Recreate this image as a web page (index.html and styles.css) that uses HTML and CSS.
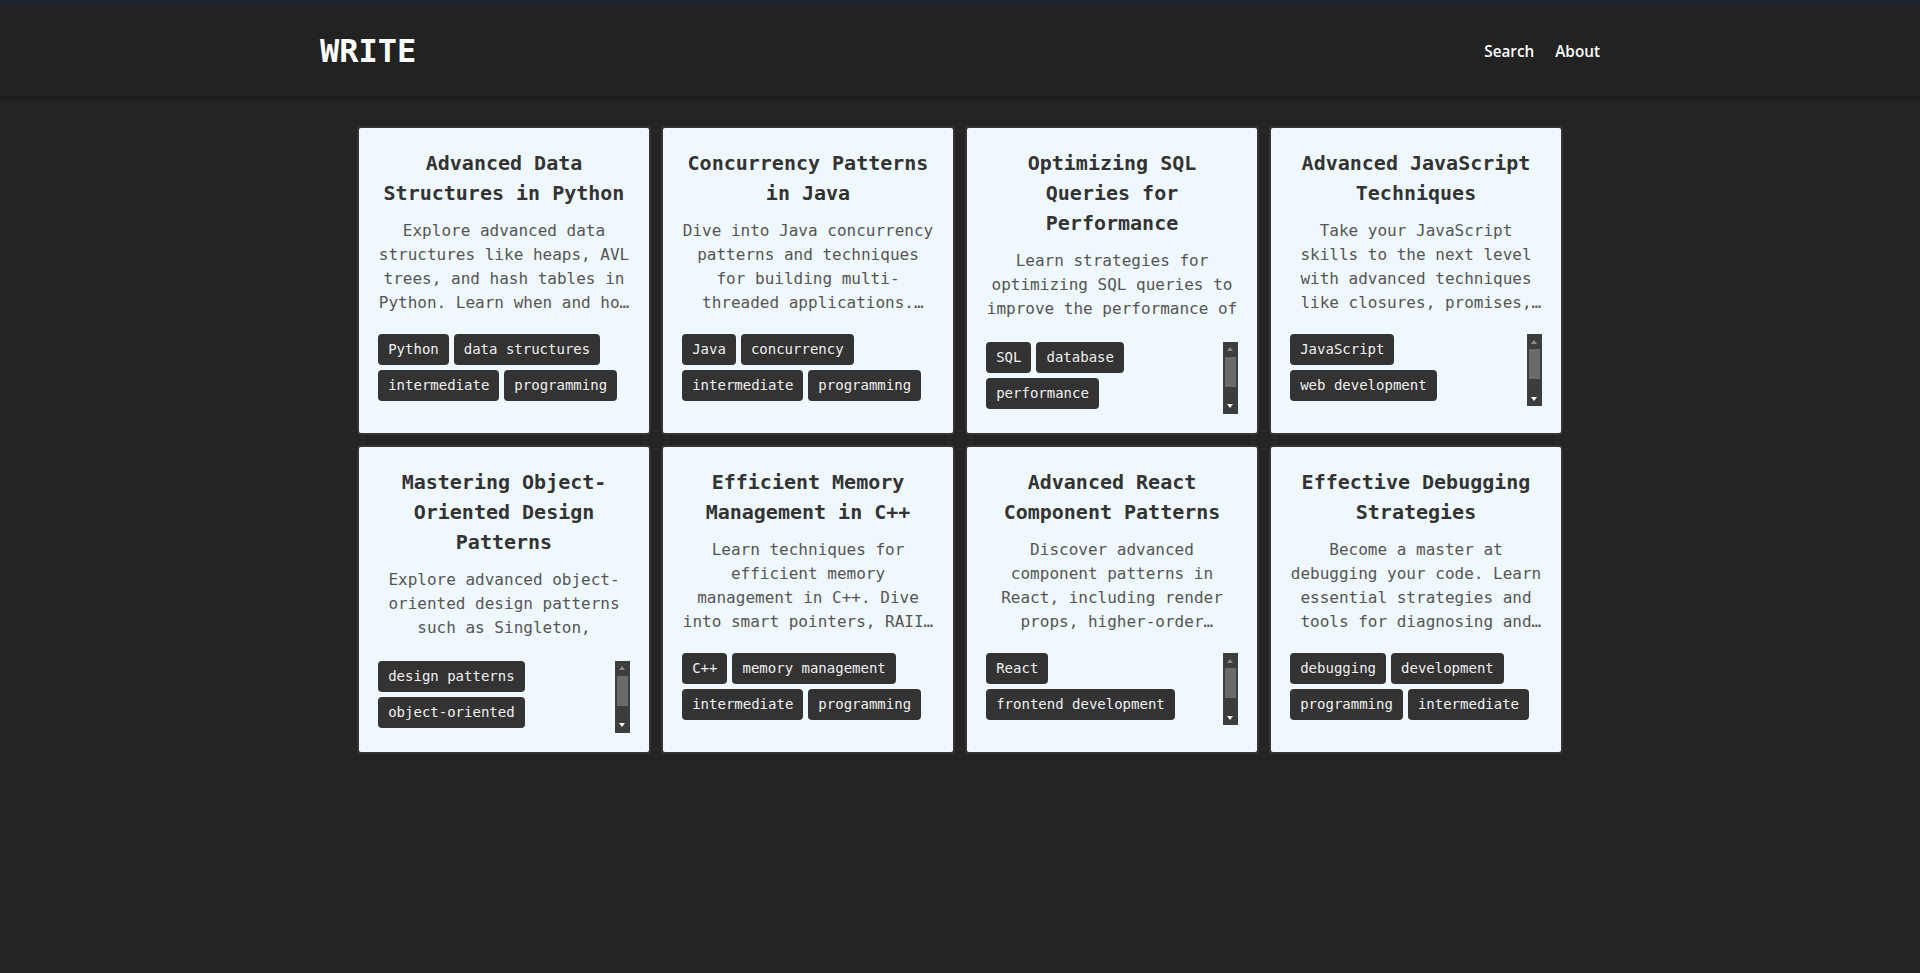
FILE: index.html
```html
<!DOCTYPE html>
<html lang="en">
<head>
<meta charset="utf-8">
<title>WRITE</title>
<link rel="stylesheet" href="styles.css">
</head>
<body>
<header class="site-header">
  <div class="header-inner">
    <a class="logo" href="#">WRITE</a>
    <nav class="nav">
      <a href="#">Search</a>
      <a href="#">About</a>
    </nav>
  </div>
</header>
<main class="main">
  <div class="grid">
    <article class="card">
      <h2 class="card-title">Advanced Data Structures in Python</h2>
      <div class="card-desc"><p>Explore advanced data structures like heaps, AVL trees, and hash tables in Python. Learn when and how to use them effectively.</p></div>
      <div class="tags-box">
        <div class="tags"><span class="tag">Python</span><span class="tag">data structures</span><span class="tag">intermediate</span><span class="tag">programming</span></div>
      </div>
    </article>
    <article class="card">
      <h2 class="card-title">Concurrency Patterns in Java</h2>
      <div class="card-desc"><p>Dive into Java concurrency patterns and techniques for building multi-threaded applications. Learn about locks, executors and more.</p></div>
      <div class="tags-box">
        <div class="tags"><span class="tag">Java</span><span class="tag">concurrency</span><span class="tag">intermediate</span><span class="tag">programming</span></div>
      </div>
    </article>
    <article class="card">
      <h2 class="card-title">Optimizing SQL Queries for Performance</h2>
      <div class="card-desc"><p>Learn strategies for optimizing SQL queries to improve the performance of your database applications.</p></div>
      <div class="tags-box">
        <div class="tags"><span class="tag">SQL</span><span class="tag">database</span><span class="tag">performance</span><span class="tag">intermediate</span><span class="tag">programming</span></div>
        <div class="scrollbar"><span class="sb-btn sb-up"></span><span class="sb-track"><span class="sb-thumb"></span></span><span class="sb-btn sb-down"></span></div>
      </div>
    </article>
    <article class="card">
      <h2 class="card-title">Advanced JavaScript Techniques</h2>
      <div class="card-desc"><p>Take your JavaScript skills to the next level with advanced techniques like closures, promises, and async/await.</p></div>
      <div class="tags-box">
        <div class="tags"><span class="tag">JavaScript</span><span class="tag">web development</span><span class="tag">advanced</span><span class="tag">programming</span></div>
        <div class="scrollbar"><span class="sb-btn sb-up"></span><span class="sb-track"><span class="sb-thumb"></span></span><span class="sb-btn sb-down"></span></div>
      </div>
    </article>
    <article class="card">
      <h2 class="card-title">Mastering Object-Oriented Design Patterns</h2>
      <div class="card-desc"><p>Explore advanced object-oriented design patterns such as Singleton, Factory, and Observer.</p></div>
      <div class="tags-box">
        <div class="tags"><span class="tag">design patterns</span><span class="tag">object-oriented</span><span class="tag">advanced</span><span class="tag">programming</span></div>
        <div class="scrollbar"><span class="sb-btn sb-up"></span><span class="sb-track"><span class="sb-thumb"></span></span><span class="sb-btn sb-down"></span></div>
      </div>
    </article>
    <article class="card">
      <h2 class="card-title">Efficient Memory Management in C++</h2>
      <div class="card-desc"><p>Learn techniques for efficient memory management in C++. Dive into smart pointers, RAII, and more.</p></div>
      <div class="tags-box">
        <div class="tags"><span class="tag">C++</span><span class="tag">memory management</span><span class="tag">intermediate</span><span class="tag">programming</span></div>
      </div>
    </article>
    <article class="card">
      <h2 class="card-title">Advanced React Component Patterns</h2>
      <div class="card-desc"><p>Discover advanced component patterns in React, including render props, higher-order components, and hooks.</p></div>
      <div class="tags-box">
        <div class="tags"><span class="tag">React</span><span class="tag">frontend development</span><span class="tag">advanced</span><span class="tag">programming</span></div>
        <div class="scrollbar"><span class="sb-btn sb-up"></span><span class="sb-track"><span class="sb-thumb"></span></span><span class="sb-btn sb-down"></span></div>
      </div>
    </article>
    <article class="card">
      <h2 class="card-title">Effective Debugging Strategies</h2>
      <div class="card-desc"><p>Become a master at debugging your code. Learn essential strategies and tools for diagnosing and fixing bugs.</p></div>
      <div class="tags-box">
        <div class="tags"><span class="tag">debugging</span><span class="tag">development</span><span class="tag">programming</span><span class="tag">intermediate</span></div>
      </div>
    </article>
  </div>
</main>
</body>
</html>
```

FILE: styles.css
```css
html, body {
  margin: 0;
  padding: 0;
}

body {
  background: #242424;
  font-family: "DejaVu Sans Mono", monospace;
  min-height: 973px;
}

.site-header {
  background: #222222;
  border-top: 5px solid #1f2330;
  height: 91px;
  box-shadow: 0 2px 6px rgba(0, 0, 0, 0.35);
}

.header-inner {
  width: 1280px;
  height: 100%;
  margin: 0 auto;
  display: flex;
  align-items: center;
  justify-content: space-between;
}

.logo {
  color: #ffffff;
  text-decoration: none;
  font-family: "DejaVu Sans Mono", monospace;
  font-weight: bold;
  font-size: 32px;
}

.nav {
  display: flex;
  gap: 21px;
}

.nav a {
  color: #ffffff;
  text-decoration: none;
  font-family: "Open Sans", sans-serif;
  font-weight: 600;
  font-size: 15.3px;
}

.main {
  padding-top: 30px;
}

.grid {
  width: 1206px;
  margin: 0 auto;
  display: grid;
  grid-template-columns: repeat(4, 294px);
  gap: 10px;
}

.card {
  box-sizing: border-box;
  height: 309px;
  background: #f0f8ff;
  border: 2px solid #333333;
  border-radius: 4px;
  padding: 20px 19.2px 19.2px;
  display: flex;
  flex-direction: column;
}

.card-title {
  margin: 0 0 11px;
  font-size: 20px;
  line-height: 30px;
  font-weight: bold;
  text-align: center;
  color: #333333;
  flex-shrink: 0;
}

.card-desc {
  flex: 0 1 auto;
  min-height: 0;
  overflow: hidden;
  margin-bottom: 19px;
}

.card-desc p {
  margin: 0;
  font-size: 16px;
  line-height: 24px;
  color: #555555;
  text-align: center;
  display: -webkit-box;
  -webkit-line-clamp: 4;
  -webkit-box-orient: vertical;
  overflow: hidden;
}

.tags-box {
  flex-shrink: 0;
  max-height: 72px;
  display: flex;
  overflow: hidden;
}

.tags {
  flex: 1 1 auto;
  min-width: 0;
  display: flex;
  flex-wrap: wrap;
  align-content: flex-start;
  gap: 5px;
}

.tag {
  background: #333333;
  color: #f0f0f0;
  font-size: 14px;
  line-height: 21px;
  padding: 5px 10px;
  border-radius: 4px;
}

.scrollbar {
  flex: 0 0 15px;
  width: 15px;
  height: 72px;
  background: #3d3d3d;
  display: flex;
  flex-direction: column;
}

.sb-btn {
  flex: 0 0 15px;
  display: flex;
  align-items: center;
  justify-content: center;
}

.sb-btn::before {
  content: "";
  width: 0;
  height: 0;
  border-left: 3.5px solid transparent;
  border-right: 3.5px solid transparent;
}

.sb-up::before {
  border-bottom: 4px solid #8a8a8a;
}

.sb-down::before {
  border-top: 4px solid #ffffff;
}

.sb-track {
  flex: 1 1 auto;
  padding: 0 2px;
}

.sb-thumb {
  display: block;
  height: 30px;
  background: #6b6b6b;
}
```
